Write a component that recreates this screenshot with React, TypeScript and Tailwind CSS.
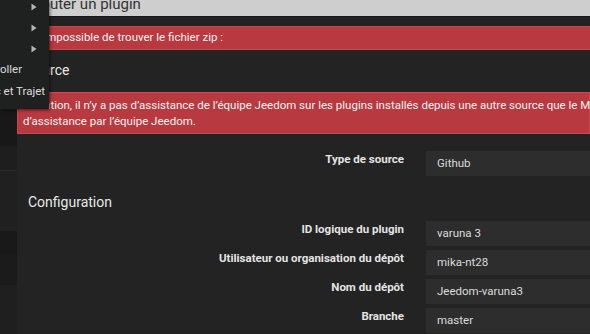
import React from "react";

const rows = [
  { label: "ID logique du plugin", value: "varuna 3" },
  { label: "Utilisateur ou organisation du dépôt", value: "mika-nt28" },
  { label: "Nom du dépôt", value: "Jeedom-varuna3" },
  { label: "Branche", value: "master" },
];

function Caret() {
  return (
    <svg width="6" height="8" viewBox="0 0 6 8" className="text-[#b5b5b5]">
      <path d="M0.5 0.5 L5.5 4 L0.5 7.5 Z" fill="currentColor" />
    </svg>
  );
}

function FormRow({ label, value }: { label: string; value: string }) {
  return (
    <div className="flex h-[25px]">
      <div className="w-[389px] shrink-0 pr-[2px] pt-[1px] text-right text-[11.5px] font-bold leading-[14px] text-[#e4e4e4]">
        {label}
      </div>
      <div className="ml-[20px] flex flex-1 items-center bg-[#2d2d2d] pl-[11px] text-[11.5px] text-[#dcdcdc]">
        {value}
      </div>
    </div>
  );
}

export default function App() {
  return (
    <div
      className="relative flex h-[334px] w-[590px] overflow-hidden bg-[#1c1c1c]"
      style={{ fontFamily: "Roboto, 'Liberation Sans', sans-serif" }}
    >
      {/* page behind the modal */}
      <div className="flex w-[17px] shrink-0 flex-col pt-[110px]">
        <div className="h-[36px] bg-[#181818]" />
        <div className="h-[24px] bg-[#1e1e1e]" />
        <div className="h-[1px] bg-[#2a2a2a]" />
        <div className="h-[60px] bg-[#202020]" />
        <div className="h-[24px] bg-[#191919]" />
        <div className="h-[30px] bg-[#1b1b1b]" />
        <div className="flex-1 bg-[#1f1f1f]" />
      </div>

      {/* modal */}
      <div className="flex min-w-0 flex-1 flex-col bg-[#232323]">
        <div className="h-[17px] overflow-hidden border-b border-[#161616] bg-[#cecece] pl-[11px]">
          <div className="-mt-[3px] text-[15px] leading-[15px] text-[#333]">Ajouter un plugin</div>
        </div>
        <div className="h-[9px] bg-[#222]" />
        <div className="flex h-[24px] items-center whitespace-nowrap border-y border-[#c9474d] bg-[#b8393f] pl-[26px] text-[11.5px] text-[#f3f3f3]">
          Impossible de trouver le fichier zip :
        </div>

        <div className="pl-[9px] pt-[10px] text-[14px] leading-[20px] text-[#e8e8e8]">Source</div>

        <div className="mt-[12px] whitespace-nowrap border border-[#c9474d] bg-[#b8393f] px-[5px] pb-[4px] pt-[4px] text-[11.5px] leading-[16px] text-[#f3f3f3]">
          <div>
            Attention, il n’y a pas d’assistance de l’équipe Jeedom sur les plugins installés depuis une
            autre source que le Market. Ces plugins ne bénéficient donc pas
          </div>
          <div>d’assistance par l’équipe Jeedom.</div>
        </div>

        <div className="mt-[17px]">
          <FormRow label="Type de source" value="Github" />
        </div>

        <div className="pl-[11px] pt-[16px] text-[14px] leading-[20px] text-[#e8e8e8]">Configuration</div>

        <div className="mt-[9px] flex flex-col gap-[4px]">
          {rows.map((r) => (
            <FormRow key={r.label} label={r.label} value={r.value} />
          ))}
        </div>
      </div>

      {/* dropdown menu lying over the modal */}
      <div className="absolute left-0 top-0 h-[109px] w-[49px] overflow-hidden bg-[#1f2020] shadow-[1px_1px_3px_rgba(0,0,0,0.6)]">
        <div className="-mt-[4px] flex flex-col">
          {[0, 1, 2].map((i) => (
            <div key={i} className="flex h-[21px] items-center justify-end pr-[12px]">
              <Caret />
            </div>
          ))}
        </div>
        <div className="-ml-[28px] flex w-[120px] flex-col whitespace-nowrap text-[11.5px] text-[#dcdcdc]">
          <div className="flex h-[22px] items-center">Controller</div>
          <div className="flex h-[22px] items-center">Trafic et Trajet</div>
        </div>
      </div>
    </div>
  );
}
